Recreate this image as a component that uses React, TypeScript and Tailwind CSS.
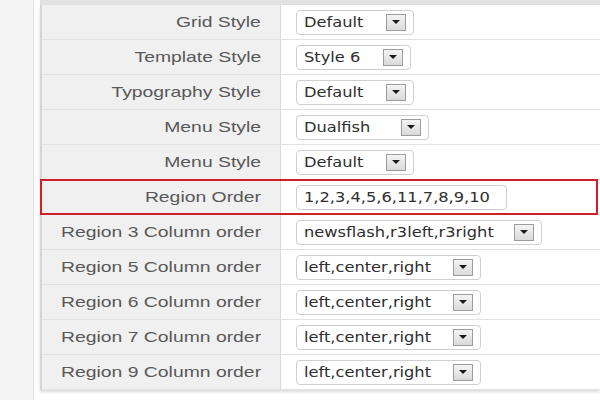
import * as React from 'react';

type Row = {
  label: string;
  value: string;
  width: number; // box width in px
  kind: 'select' | 'input';
  marked?: boolean;
};

const rows: Row[] = [
  { label: 'Grid Style', value: 'Default', width: 118, kind: 'select' },
  { label: 'Template Style', value: 'Style 6', width: 115, kind: 'select' },
  { label: 'Typography Style', value: 'Default', width: 118, kind: 'select' },
  { label: 'Menu Style', value: 'Dualfish', width: 133, kind: 'select' },
  { label: 'Menu Style', value: 'Default', width: 118, kind: 'select' },
  { label: 'Region Order', value: '1,2,3,4,5,6,11,7,8,9,10', width: 211, kind: 'input', marked: true },
  { label: 'Region 3 Column order', value: 'newsflash,r3left,r3right', width: 246, kind: 'select' },
  { label: 'Region 5 Column order', value: 'left,center,right', width: 185, kind: 'select' },
  { label: 'Region 6 Column order', value: 'left,center,right', width: 185, kind: 'select' },
  { label: 'Region 7 Column order', value: 'left,center,right', width: 185, kind: 'select' },
  { label: 'Region 9 Column order', value: 'left,center,right', width: 185, kind: 'select' },
];

function ArrowButton() {
  return (
    <span className="flex h-[17px] w-[20px] items-center justify-center border border-[#9c9c9c] bg-gradient-to-b from-[#f4f4f4] to-[#dadada]">
      <svg width="8" height="4" viewBox="0 0 8 4">
        <polygon points="0,0 8,0 4,4" fill="#1a1a1a" />
      </svg>
    </span>
  );
}

function Field({ row }: { row: Row }) {
  return (
    <div
      className="flex h-[25px] items-center justify-between rounded-[4px] border border-[#cfcfcf] bg-white pl-[7px] pr-[7px]"
      style={{ width: row.width }}
    >
      <span className="inline-block origin-left scale-x-[1.16] whitespace-nowrap font-['DejaVu_Sans',sans-serif] text-[14px] text-[#2e2e2e]">
        {row.value}
      </span>
      {row.kind === 'select' && <ArrowButton />}
    </div>
  );
}

export default function App() {
  return (
    <div className="flex h-[400px] w-[600px] overflow-hidden bg-white">
      {/* left side panel */}
      <div className="w-[34px] shrink-0 border-r border-[#e3e3e3] bg-[#f4f4f4]" />
      <div className="w-[6px] shrink-0" />

      {/* params table */}
      <div className="flex-1">
        <div className="h-[5px] bg-[#e2e2e2]" />
        <div className="border-l-2 border-[#d6d6d6] shadow-[0_2px_3px_rgba(0,0,0,0.15)]">
          {rows.map((r, i) => (
            <div key={i} className="relative grid h-[35px] grid-cols-[239px_1fr] border-b border-[#e2e2e2]">
              <div className="flex items-center justify-end border-r border-[#dadada] bg-[#f0f0f0] pr-[19px]">
                <span className="inline-block origin-right scale-x-[1.29] whitespace-nowrap font-['Liberation_Sans',Arial,sans-serif] text-[15px] text-[#585858]">
                  {r.label}
                </span>
              </div>
              <div className="flex items-center pl-[15px]">
                <Field row={r} />
              </div>
              {r.marked && (
                <div className="pointer-events-none absolute -top-[1px] -bottom-[1px] -left-[2px] right-[2px] border-2 border-[#cf1f2b]" />
              )}
            </div>
          ))}
        </div>
      </div>
    </div>
  );
}
